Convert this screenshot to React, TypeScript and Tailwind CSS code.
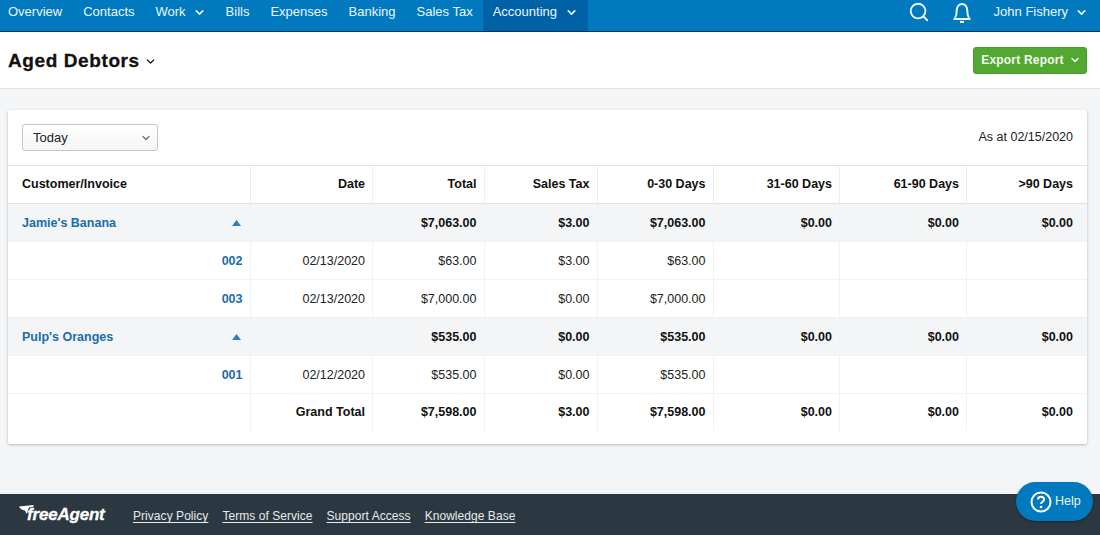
import React from "react";
import { ChevronDown, Search } from "lucide-react";

const nav: [string, boolean][] = [["Overview", false], ["Contacts", false], ["Work", true], ["Bills", false], ["Expenses", false], ["Banking", false], ["Sales Tax", false]];
const cols = ["w-[242px]", "w-[122px]", "w-[112px]", "w-[113px]", "w-[116px]", "w-[126px]", "w-[127px]", "w-[121px]"];
const heads = ["Date", "Total", "Sales Tax", "0-30 Days", "31-60 Days", "61-90 Days", ">90 Days"];
const pads = ["pr-[6.5px]", "pr-[7px]", "pr-[7px]", "pr-[7px]", "pr-[6.5px]", "pr-[6.5px]", "pr-[14px]"];

type Row = { kind: "group" | "inv" | "total"; name: string; cells: string[] };
const rows: Row[] = [
  { kind: "group", name: "Jamie's Banana", cells: ["", "$7,063.00", "$3.00", "$7,063.00", "$0.00", "$0.00", "$0.00"] },
  { kind: "inv", name: "002", cells: ["02/13/2020", "$63.00", "$3.00", "$63.00", "", "", ""] },
  { kind: "inv", name: "003", cells: ["02/13/2020", "$7,000.00", "$0.00", "$7,000.00", "", "", ""] },
  { kind: "group", name: "Pulp's Oranges", cells: ["", "$535.00", "$0.00", "$535.00", "$0.00", "$0.00", "$0.00"] },
  { kind: "inv", name: "001", cells: ["02/12/2020", "$535.00", "$0.00", "$535.00", "", "", ""] },
  { kind: "total", name: "", cells: ["Grand Total", "$7,598.00", "$3.00", "$7,598.00", "$0.00", "$0.00", "$0.00"] },
];

export default function App() {
  return (
    <div className="relative flex h-[535px] w-[1100px] flex-col overflow-hidden bg-[#f3f5f7] font-['Liberation_Sans',Arial,sans-serif] text-[13px] text-[#111]">
      <header className="flex h-8 shrink-0 items-stretch justify-between border-b border-[#03316b] bg-[#0079bf] text-[#eef6fb]">
        <nav className="flex items-stretch">
          <div className="flex items-stretch pl-2">
            {nav.map(([n, c]) => (
              <a key={n} className="mr-[21px] flex items-center pb-[7px] last:mr-[10px]">
                {n}
                {c && <ChevronDown size={13} strokeWidth={3} className="ml-[7px] mr-[-1px]" />}
              </a>
            ))}
          </div>
          <a className="flex w-[105px] items-center gap-2 bg-[#0062a6] pb-[7px] pl-[10px]">
            Accounting
            <ChevronDown size={13} strokeWidth={3} />
          </a>
        </nav>
        <div className="flex items-center pb-[7px] pr-3">
          <Search size={22} strokeWidth={2} className="mr-[22px]" />
          <svg width="20" height="21" viewBox="0 0 20 21" fill="none" stroke="currentColor" strokeWidth="2" className="mr-[22px]">
            <path d="M3 16c1.5-2 1.7-4 1.7-7C4.700 4.500 7 2 10 2s5.300 2.500 5.300 7c0 3 .2 5 1.700 7" />
            <path d="M1.500 17h17" />
            <path d="M8 20h4" strokeWidth="2.200" />
          </svg>
          <span>John Fishery</span>
          <ChevronDown size={13} strokeWidth={3} className="ml-[7px]" />
        </div>
      </header>

      <div className="flex h-[57px] shrink-0 items-center justify-between border-b border-[#dfe1e3] bg-white pl-2 pr-[13px]">
        <div className="flex items-center gap-1">
          <h1 className="mt-[2px] text-[19px] font-bold tracking-[0.6px] text-[#111] [-webkit-text-stroke:0.3px_#111]">Aged Debtors</h1>
          <ChevronDown size={13} strokeWidth={2.5} className="mt-[2px]" />
        </div>
        <button className="flex h-[27px] w-[114px] items-center justify-center gap-[5px] rounded-[3px] border border-[#4b9b28] bg-[#52a830] pl-[2px] text-[12px] font-bold tracking-[0.2px] text-[#f4f9f1]">
          Export Report
          <ChevronDown size={12} strokeWidth={3} />
        </button>
      </div>

      <main className="flex-1 px-2 pt-[21px]">
        <section className="h-[334px] w-[1079px] rounded-[2px] bg-white shadow-[0_1px_3px_rgba(0,0,0,0.25)]">
          <div className="flex h-[55px] items-center justify-between px-[14px]">
            <div className="flex h-[27px] w-[136px] items-center justify-between rounded-[3px] border border-[#c4c7ca] bg-gradient-to-b from-white to-[#f4f5f6] pl-[10px] pr-[5px] text-[#222]">
              Today
              <ChevronDown size={12} strokeWidth={2.5} className="text-[#6b7280]" />
            </div>
            <span className="text-[12.5px] text-[#222]">As at 02/15/2020</span>
          </div>
          <table className="w-[1079px] table-fixed border-collapse">
            <colgroup>
              {cols.map((c, i) => <col key={i} className={c} />)}
            </colgroup>
            <thead>
              <tr className="h-[38px] border-y border-[#dfe1e3]">
                <th className="pl-[14px] text-left text-[12.5px] font-bold">Customer/Invoice</th>
                {heads.map((h, i) => (
                  <th key={h} className={`border-l border-[#eceef0] text-right text-[12.5px] font-bold ${pads[i]}`}>{h}</th>
                ))}
              </tr>
            </thead>
            <tbody>
              {rows.map((r, idx) => (
                <tr key={idx} className={`border-t border-[#f1f2f4] ${r.kind === "total" ? "h-[37px]" : "h-[38px]"} ${r.kind === "group" ? "bg-[#f3f5f7]" : ""}`}>
                  <td className={`pt-px text-[12.5px] font-bold text-[#1b6cae] ${r.kind === "group" ? "pl-[14px] pr-[9px]" : "pr-[7px] text-right"}`}>
                    {r.kind === "group" ? (
                      <div className="flex items-center justify-between">
                        <span>{r.name}</span>
                        <svg width="9" height="6" viewBox="0 0 9 6"><path d="M4.500 0 9 6H0z" fill="#2b80c0" /></svg>
                      </div>
                    ) : (
                      r.name
                    )}
                  </td>
                  {r.cells.map((c, i) => (
                    <td key={i} className={`border-l border-[#f1f2f4] pt-px text-right text-[12.5px] ${pads[i]} ${r.kind !== "inv" ? "font-bold" : "text-[#222]"}`}>{c}</td>
                  ))}
                </tr>
              ))}
            </tbody>
          </table>
        </section>
      </main>

      <footer className="flex h-[41px] shrink-0 items-center bg-[#2c3841] pl-[19px] text-[12px] text-[#e7eaec]">
        <span className="relative mr-[28px] w-[86px] pl-[8px] text-[17px] font-bold italic leading-none tracking-[-0.2px] text-white [-webkit-text-stroke:0.3px_#fff]">
          <svg className="absolute left-0 top-[-1px]" width="15" height="9" viewBox="0 0 15 9" fill="#fff"><path d="M0 1.500 15 0l-1 2-4 .5L7.500 9 6 5.500C3.500 5.500 1.500 4 0 1.500z" /></svg>
          freeAgent
        </span>
        <div className="flex gap-[14px] pt-[3px] tracking-[0.05px]">
          <a className="underline underline-offset-2">Privacy Policy</a>
          <a className="underline underline-offset-2">Terms of Service</a>
          <a className="underline underline-offset-2">Support Access</a>
          <a className="underline underline-offset-2">Knowledge Base</a>
        </div>
      </footer>

      <button className="absolute left-[1016px] top-[482px] flex h-[39px] w-[77px] items-center gap-[3px] rounded-[20px] bg-[#0079bf] pl-[14px] text-[12.5px] text-[#eef6fb] shadow-[0_1px_2px_rgba(0,0,0,0.4)]">
        <svg width="22" height="22" viewBox="0 0 22 22" fill="none">
          <circle cx="11" cy="11" r="9.500" stroke="#fff" strokeWidth="2" />
          <path d="M8 8.600c0-1.800 1.400-2.800 3-2.800s3 1 3 2.600c0 2.400-3 2.300-3 4.600" stroke="#fff" strokeWidth="2" fill="none" />
          <circle cx="11" cy="16" r="1.300" fill="#fff" />
        </svg>
        Help
      </button>
    </div>
  );
}
